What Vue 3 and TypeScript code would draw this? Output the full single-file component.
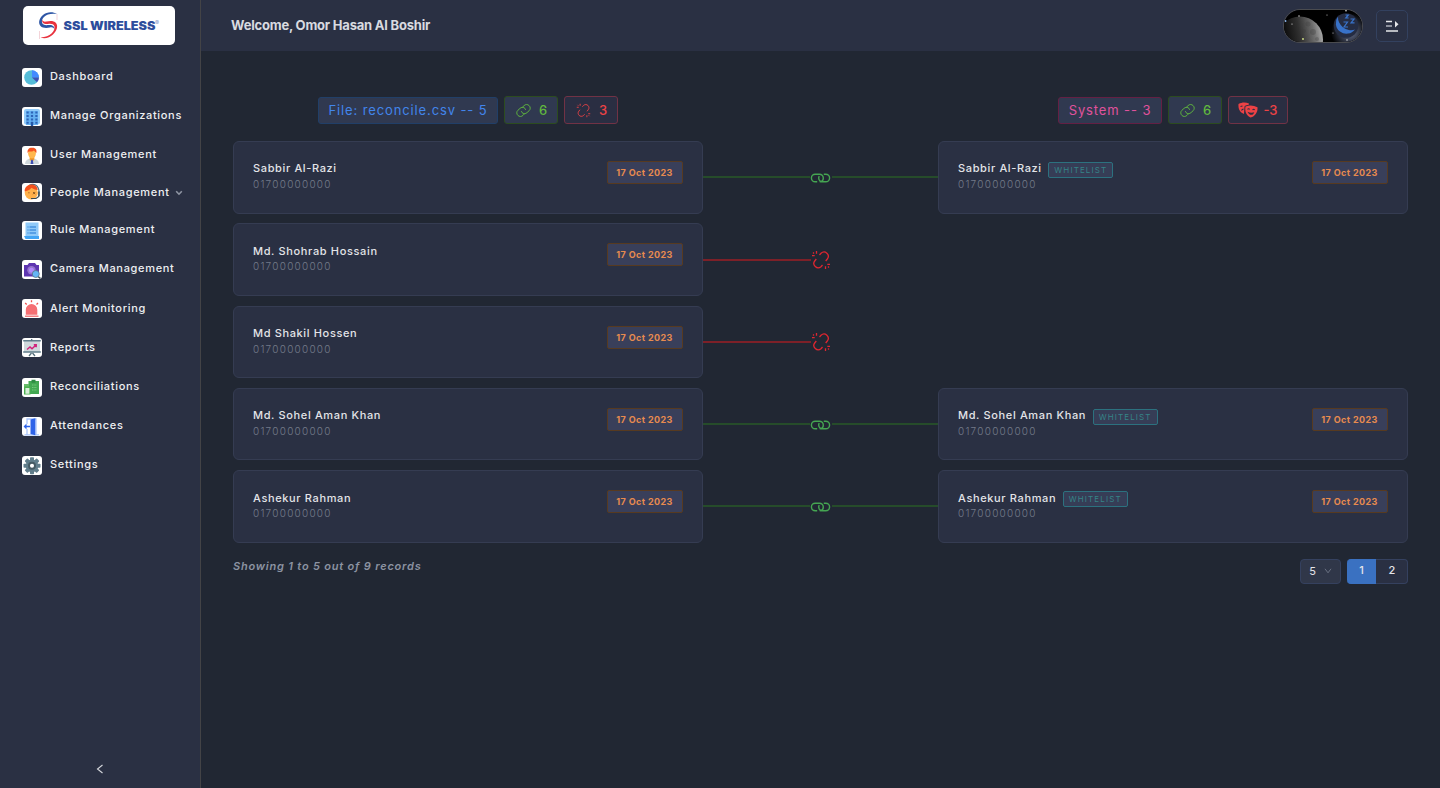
<script setup lang="ts">
interface NavItem {
  icon: string
  label: string
  expandable?: boolean
}
interface Person {
  name: string
  phone: string
  date: string
  matched: boolean
}

const nav: NavItem[] = [
  { icon: 'pie', label: 'Dashboard' },
  { icon: 'building', label: 'Manage Organizations' },
  { icon: 'user', label: 'User Management' },
  { icon: 'people', label: 'People Management', expandable: true },
  { icon: 'rule', label: 'Rule Management' },
  { icon: 'camera', label: 'Camera Management' },
  { icon: 'alert', label: 'Alert Monitoring' },
  { icon: 'report', label: 'Reports' },
  { icon: 'clipboard', label: 'Reconciliations' },
  { icon: 'door', label: 'Attendances' },
  { icon: 'gear', label: 'Settings' },
]

const phone = '01700000000'
const date = '17 Oct 2023'
const records: Person[] = [
  { name: 'Sabbir Al-Razi', phone, date, matched: true },
  { name: 'Md. Shohrab Hossain', phone, date, matched: false },
  { name: 'Md Shakil Hossen', phone, date, matched: false },
  { name: 'Md. Sohel Aman Khan', phone, date, matched: true },
  { name: 'Ashekur Rahman', phone, date, matched: true },
]

const gearTeeth = [0, 45, 90, 135, 180, 225, 270, 315]
</script>

<template>
  <div class="app">
    <aside class="sidebar">
      <div class="logo">
        <svg width="152" height="39" viewBox="0 0 152 39">
          <path d="M34 8C30 5.500 24 5.500 20 9c-4 3.500-5 8-2.500 11 2 2.200 6 2.300 9.500 1.500 2.500-.5 4 .3 4.300 2C32 20 29 18.500 25.500 19c-3 .4-6 0-6.500-2.500C18.300 12 23 6.500 34 8z" fill="#2d55a5" />
          <path d="M17.500 31.500c4 1.500 9 .5 12.500-3 4-4 5.300-8.500 3-11.500-2-2.300-6-2.300-9.500-1.500-2.500.5-4-.3-4.300-2-.7 3.500 2.300 5 5.800 4.500 3-.4 6 0 6.500 2.500.7 4.500-4 10.500-14 11z" fill="#e8323e" />
          <path d="M16.500 25v8M34 8v6" stroke="#f0c3c9" stroke-width="1" opacity=".7" />
          <text class="logo-text" x="40.500" y="24" textLength="92" lengthAdjust="spacingAndGlyphs">SSL WIRELESS</text>
          <text class="logo-mark" x="132" y="19">®</text>
        </svg>
      </div>
      <nav class="nav">
        <div v-for="item in nav" :key="item.label" class="nav-item" :class="{ compact: item.expandable }">
          <span class="nav-icon">
            <svg width="20" height="19" viewBox="0 0 20 19">
              <g v-if="item.icon === 'pie'">
                <circle cx="9.500" cy="9.500" r="7.300" fill="#55bcd8" />
                <path d="M10 9.500V2.200A7.300 7.300 0 0 1 17 9.500z" fill="#448aff" />
                <path d="M10 9.500h7a7 7 0 0 1-2 4.800z" fill="#3f51b5" />
              </g>
              <g v-else-if="item.icon === 'building'">
                <rect x="2" y="2" width="16" height="15.500" rx="2" fill="#90caf9" />
                <path d="M4 4h12v14H4z" fill="#64b0f2" />
                <path d="M4.500 5.500h11M4.500 9h11M4.500 12.500h11M4.500 15.700h11" stroke="#2d64b8" stroke-width="2" stroke-dasharray="2.200 2.200" />
                <path d="M8.800 15h2.400v4H8.800z" fill="#2457a6" />
              </g>
              <g v-else-if="item.icon === 'user'">
                <path d="M3 18c.3-4 3-5 5-5.500h4c2 .5 4.700 1.500 5 5.500z" fill="#cfd8dc" />
                <path d="M7.700 10h4.600v4L10 15.500 7.700 14z" fill="#f59b28" />
                <ellipse cx="10" cy="7.500" rx="3.900" ry="4.800" fill="#ffb74d" />
                <path d="M5.700 7C5 3.500 7 1.500 10.500 1.800c3.500 0 4.500 2.500 3.800 5.200C13 6 12.500 5 12 4.500 10 6 8 5.500 6.800 5.500z" fill="#f4511e" />
                <path d="M9.200 13.800h1.600l.6 4.200H8.600z" fill="#3f51b5" />
              </g>
              <g v-else-if="item.icon === 'people'">
                <path d="M7 2.500c5-3 10 0 10 6.500v2" fill="none" stroke="#546e7a" stroke-width="1.200" />
                <circle cx="9.300" cy="9.800" r="6.600" fill="#ffb04a" />
                <path d="M2.700 8.500C2.200 4.500 6 1.300 9.500 1.500c4 0 6.200 2.700 6.200 5.500C13 7 11 6 9.500 4.800 8 7 5 8.200 2.700 8.500z" fill="#f4511e" />
                <path d="M6.300 9.800h1.200M11 9l2.200 2.200M13.200 9 11 11.200" stroke="#784719" stroke-width=".8" />
                <path d="M16.800 11v2.500L14 15.500H9" fill="none" stroke="#37474f" stroke-width="1.200" />
                <path d="M16 8.500h1.800v4.500H16z" fill="#455a64" />
              </g>
              <g v-else-if="item.icon === 'rule'">
                <path d="M3.500 1.500h13v14h-13z" fill="#90caf9" />
                <path d="M2 15h15v3H3.500z" fill="#42a5f5" />
                <path d="M5.500 6h1M7.500 6h6.500M5.500 9h1M7.500 9h6.500M5.500 12h1M7.500 12h6.500" stroke="#4693df" stroke-width="1.300" />
              </g>
              <g v-else-if="item.icon === 'camera'">
                <path d="M2 5h3.500L7 3h6l1.500 2H17v11.500H2z" fill="#5e35b1" />
                <circle cx="9.500" cy="10.200" r="4.200" fill="#9575cd" />
                <circle cx="9.500" cy="10.200" r="2.500" fill="#b388ff" />
                <path d="m15.500 16 3 2.500" stroke="#37474f" stroke-width="1.500" />
                <circle cx="13.800" cy="14" r="3.500" fill="#64b5f6" stroke="#5b7382" stroke-width=".8" />
              </g>
              <g v-else-if="item.icon === 'alert'">
                <path d="M3.800 15.800v-5a5.700 5.700 0 0 1 11.500 0v5z" fill="#f56f73" />
                <path d="M3 17.200h13.500" stroke="#f27c80" stroke-width="1.400" />
                <path d="M9.500 1.200v2M3.200 4 4.700 5.500M16 4l-1.500 1.500" stroke="#ef5350" stroke-width="1.300" />
              </g>
              <g v-else-if="item.icon === 'report'">
                <path d="M2 3h16v11H2z" fill="#cfd8dc" />
                <path d="M1.200 2.700h17.600M1.200 14h17.600" stroke="#607d8b" stroke-width="1.500" />
                <path d="M9.700 1v1.500M9.500 15l-2.500 3M10.500 15l2.500 3" stroke="#546e7a" stroke-width="1.300" />
                <path d="m5 11.500 3-2.500 2 1.800 4-3.800M11.800 6.700H14.200v2.500" fill="none" stroke="#d0247c" stroke-width="1.500" />
              </g>
              <g v-else-if="item.icon === 'clipboard'">
                <path d="M6.500 3h10.500v13H6.500z" fill="#43a852" />
                <path d="M9.500 1.800h4v3h-4z" fill="#2e8b43" />
                <path d="M2 6h5v3H2z" fill="#66bb6a" />
                <path d="M2 8.500h6.500v8H2z" fill="#4caf50" />
                <path d="M3.400 10h4v5.700H3.400z" fill="#d7efd8" />
                <path d="M10 7h5M10 9.500h5M10 12h5" stroke="#74ca7a" stroke-width="1" stroke-dasharray="1.500 .8" />
              </g>
              <g v-else-if="item.icon === 'door'">
                <path d="M5 7V2h9v15.500M5 12v5.500M2.500 17.800h14.500" fill="none" stroke="#a8c3fa" stroke-width="1.300" />
                <path d="m8.500 2.500 4.800-1.200v17l-4.800-1.200z" fill="#2e63e8" />
                <path d="M8 9.500H2.500M4.500 7.500l-2 2 2 2" fill="none" stroke="#2e63e8" stroke-width="1.300" />
              </g>
              <g v-else>
                <rect v-for="a in gearTeeth" :key="a" x="8" y="1.200" width="4" height="5" rx=".8" fill="#607d8b" :transform="`rotate(${a} 10 9.700)`" />
                <circle cx="10" cy="9.700" r="6.300" fill="#607d8b" />
                <circle cx="10" cy="9.700" r="3" fill="#fff" stroke="#455a64" stroke-width="1.900" />
              </g>
            </svg>
          </span>
          <span class="nav-label">{{ item.label }}</span>
          <svg v-if="item.expandable" class="nav-chevron" width="8" height="6" viewBox="0 0 8 6">
            <path d="m1.200 1.200 2.800 3 2.800-3" fill="none" stroke="#8f95a3" stroke-width="1.600" />
          </svg>
        </div>
      </nav>
      <div class="collapse">
        <svg width="8" height="10" viewBox="0 0 8 10"><path d="M6.500 1 1.500 5l5 4" fill="none" stroke="#d5d7dc" stroke-width="1.100" /></svg>
      </div>
    </aside>

    <div class="page">
      <header class="topbar">
        <h1 class="welcome">Welcome, Omor Hasan Al Boshir</h1>
        <div class="theme-toggle">
          <svg width="78" height="32" viewBox="0 0 78 32">
            <defs>
              <linearGradient id="moon" x1=".1" y1=".4" x2=".95" y2=".25">
                <stop offset="0" stop-color="#050505" />
                <stop offset=".45" stop-color="#303030" />
                <stop offset=".8" stop-color="#6c6c6c" />
                <stop offset="1" stop-color="#a3a3a3" />
              </linearGradient>
              <radialGradient id="glow">
                <stop offset="0" stop-color="#67718f" />
                <stop offset="1" stop-color="#000" />
              </radialGradient>
            </defs>
            <rect width="78" height="32" fill="#000" />
            <circle cx="66" cy="22" r="19" fill="url(#glow)" />
            <circle cx="16" cy="29.500" r="23" fill="url(#moon)" />
            <g fill="#3c3c3c" opacity=".3"><circle cx="24" cy="14" r="2.500" /><circle cx="29" cy="22" r="3" /><circle cx="20" cy="21" r="2" /><circle cx="33" cy="29" r="2" /></g>
            <g fill="#eee"><circle cx="15" cy="6" r=".7" /><circle cx="8" cy="14" r=".6" /><circle cx="43" cy="5" r=".5" /><circle cx="62" cy=".8" r=".8" /><circle cx="49" cy="23" r=".5" /><circle cx="63" cy="30" r=".7" /></g>
            <circle cx="19" cy="29" r=".9" fill="#d8e98b" />
            <circle cx="1.500" cy="11" r="1" fill="#8bb7ee" />
            <circle cx="62" cy="15.500" r="12.300" fill="#252c42" />
            <path d="M54 6.500A10.500 10.500 0 1 0 71 19.500 13 13 0 0 1 54 6.500z" fill="#3872c9" />
            <path d="M59.500 12h4l-3.500 5h4M66.500 9h3.500l-3 3.800h3.500M61.500 5h2.800l-2.500 3h2.800" fill="none" stroke="#3872c9" stroke-width="1.200" />
          </svg>
        </div>
        <button class="menu-button">
          <svg width="14" height="14" viewBox="0 0 14 14">
            <path d="M1 2.500h6M1 12h12" stroke="#e6e7ea" stroke-width="1.500" />
            <path d="M1 7h6" stroke="#b0b3bc" stroke-width="1.500" />
            <path d="m10 2 3.500 3.200-3.500 3.300z" fill="#e6e7ea" />
          </svg>
        </button>
      </header>

      <main class="content">
        <div class="summary">
          <div v-for="side in 2" :key="side" class="summary-side">
            <span v-if="side === 1" class="tag source blue">File: reconcile.csv -- 5</span>
            <span v-else class="tag source pink">System -- 3</span>
            <span class="tag count green">
              <svg width="15" height="15" viewBox="0 0 16 16">
                <g fill="none" stroke="currentColor" stroke-width="1" stroke-linecap="round">
                  <path d="M6.800 4.600 8.600 2.800a3.700 3.700 0 0 1 5.400 0 3.700 3.700 0 0 1 0 5.400L11.800 10.200a3.700 3.700 0 0 1-5.400 0 2.500 2.500 0 0 1-.6-1.100" />
                  <path d="M9.200 11.400 7.400 13.200a3.700 3.700 0 0 1-5.400 0 3.700 3.700 0 0 1 0-5.400L4.200 5.800a3.700 3.700 0 0 1 5.400 0c.3.300.5.600.6 1.100" />
                </g>
              </svg>
              <b>6</b>
            </span>
            <span v-if="side === 1" class="tag count red">
              <svg width="15" height="15" viewBox="0 0 20 20">
                <g fill="none" stroke="currentColor" stroke-width="1.200">
                  <path d="m8.500 5 1.500-1.700c4-3.600 9.500 1.500 6.300 5.700L14.700 11" />
                  <path d="m11.500 15-1.500 1.700C6 20 .8 15 3.700 11L5.300 9" />
                  <path d="M5.500 1v2.700M1 5.700h2.700M14.500 16.300V19M16.300 14.300H19M2 2.500 3 3.500M18 17.500l-1-1" />
                </g>
              </svg>
              <b>3</b>
            </span>
            <span v-else class="tag count red masks">
              <svg width="20" height="16" viewBox="0 0 20 16">
                <path d="M.5 2C4 0 7.500 0 11 1.500L10.500 3C8.500 3 7 3.500 6.500 4.500L6 12C2 10.500 0 7 .5 2z" fill="currentColor" />
                <path d="M7.500 4.500c4-1.500 8-1.200 12 .7C20 10 17 14.500 12.500 15.500 8.500 13.500 6.500 9.500 7.500 4.500z" fill="currentColor" />
                <path d="M2.500 4.500 4.500 4M3.500 8.500c.5-1 1-1.300 2-1.400M9.500 7.300c.8-.8 1.600-.6 2.200 0M14.500 7.800c.8-.6 1.600-.6 2.200.2" stroke="#2a3043" fill="none" stroke-width="1.100" />
                <path d="M9.500 9.800c2 1 4.500 1.200 6.800.5-1 3.500-5.300 3.500-6.800-.5z" fill="#2a3043" />
              </svg>
              <b>-3</b>
            </span>
          </div>
        </div>

        <div class="records">
          <div v-for="person in records" :key="person.name" class="record">
            <article class="card">
              <div class="identity">
                <div class="name">{{ person.name }}</div>
                <div class="phone">{{ person.phone }}</div>
              </div>
              <span class="date">{{ person.date }}</span>
            </article>
            <div class="link" :class="person.matched ? 'matched' : 'broken'">
              <i class="wire"></i>
              <svg v-if="person.matched" class="joint" width="22" height="12" viewBox="0 0 22 12">
                <g fill="none" stroke="#45a552" stroke-width="1.400">
                  <path d="M7.200 9.800H5.200a3.800 3.800 0 0 1 0-7.600h4.300a3.800 3.800 0 0 1 3.800 3.800 3.800 3.800 0 0 1-3.600 3.800" />
                  <path d="M13.800 2.200h2a3.800 3.800 0 0 1 0 7.600h-3.300A3.800 3.800 0 0 1 8.700 6c0-.8.200-1.300.6-1.900" />
                </g>
              </svg>
              <svg v-else width="20" height="20" viewBox="0 0 20 20">
                <g fill="none" stroke="#de2630" stroke-width="1.300">
                  <path d="m8.500 5 1.500-1.700c4-3.600 9.500 1.500 6.300 5.700L14.700 11" />
                  <path d="m11.500 15-1.500 1.700C6 20 .8 15 3.700 11L5.300 9" />
                  <path d="M5.500 1v2.700M1 5.700h2.700M14.500 16.300V19M16.300 14.300H19M2 2.500 3 3.500M18 17.500l-1-1" />
                </g>
              </svg>
              <i class="wire" :class="{ hidden: !person.matched }"></i>
            </div>
            <article v-if="person.matched" class="card">
              <div class="identity">
                <div class="name">{{ person.name }}<span class="whitelist">WHITELIST</span></div>
                <div class="phone">{{ person.phone }}</div>
              </div>
              <span class="date">{{ person.date }}</span>
            </article>
          </div>
        </div>

        <footer class="footer">
          <em class="showing">Showing 1 to 5 out of 9 records</em>
          <div class="pager">
            <span class="page-size">5
              <svg width="8" height="6" viewBox="0 0 8 6"><path d="m1 .8 3 4 3-4" fill="none" stroke="#6a7182" /></svg>
            </span>
            <span class="pages"><b class="current">1</b><b>2</b></span>
          </div>
        </footer>
      </main>
    </div>
  </div>
</template>

<style>
body {
  background: #212733;
}
</style>

<style scoped>
* {
  box-sizing: border-box;
}
.app {
  display: flex;
  height: 788px;
  overflow: hidden;
  background: #212733;
  color: #e4e5e9;
  font-family: Inter, "Liberation Sans", sans-serif;
}
svg {
  display: block;
  flex: none;
}
.sidebar {
  display: flex;
  flex-direction: column;
  width: 201px;
  padding-top: 6px;
  background: #2a3043;
  border-right: 1px solid #434346;
}
.logo {
  width: 152px;
  height: 39px;
  margin-left: 23px;
  border-radius: 5px;
  background: #fff;
}
.logo-text {
  font: 900 11.500px Inter, sans-serif;
  fill: #2d4d9c;
}
.logo-mark {
  font: 6px Inter, sans-serif;
  fill: #8197c7;
}
.nav {
  margin-top: 12.500px;
  padding-left: 22px;
}
.nav-item {
  display: flex;
  align-items: center;
  height: 39.150px;
}
.nav-item.compact {
  height: 36px;
}
.nav-icon {
  width: 20px;
  height: 19px;
  border-radius: 3px;
  background: #fff;
  overflow: hidden;
}
.nav-label {
  margin: -2.300px 0 0 8px;
  font-size: 11px;
  font-weight: 500;
  letter-spacing: 0.680px;
  white-space: nowrap;
  color: #eeeff2;
}
.nav-chevron {
  margin-left: 5.500px;
}
.collapse {
  display: flex;
  justify-content: center;
  margin-top: auto;
  padding-bottom: 14px;
}
.page {
  flex: 1;
}
.topbar {
  display: flex;
  align-items: center;
  height: 51px;
  padding: 0 32px 0 30px;
  background: #2a3043;
}
.welcome {
  flex: 1;
  margin: 0;
  padding-bottom: 2px;
  font-size: 13px;
  font-weight: 700;
  letter-spacing: -0.200px;
  color: #d9dbe0;
}
.theme-toggle {
  width: 80px;
  height: 34px;
  border: 1px solid #4a4b4f;
  border-radius: 17px;
  overflow: hidden;
}
.menu-button {
  display: flex;
  align-items: center;
  justify-content: center;
  width: 32px;
  height: 32px;
  margin-left: 13px;
  padding: 0;
  border: 1px solid #33415f;
  border-radius: 5px;
  background: #2a3043;
}
.content {
  padding: 45px 32px 0;
}
.summary {
  display: flex;
  justify-content: space-between;
}
.summary-side {
  display: flex;
  align-items: flex-end;
  justify-content: center;
  gap: 6px;
  width: 470px;
}
.tag {
  display: flex;
  align-items: center;
  justify-content: center;
  border: 1px solid;
  border-radius: 3px;
  background: #303950;
}
.source {
  height: 27px;
  padding-bottom: 2px;
  font-size: 13px;
  letter-spacing: 0.880px;
  white-space: nowrap;
}
.source.blue {
  width: 180px;
  color: #4285eb;
  border-color: #213f68;
}
.source.pink {
  width: 104px;
  color: #e0529c;
  border-color: #642044;
}
.count {
  gap: 8px;
  width: 54px;
  height: 28px;
  padding-left: 1px;
  font-size: 13px;
}
.count b {
  font-weight: 500;
}
.count.green {
  color: #60b83e;
  border-color: #2c4c1f;
}
.count.red {
  color: #ed4245;
  border-color: #713245;
  background: #2a2e42;
}
.count.masks {
  width: 60px;
  gap: 5px;
  padding-left: 0;
}
.records {
  display: grid;
  gap: 9.800px;
  margin-top: 17px;
}
.record {
  display: grid;
  grid-template-columns: 470px 235px 470px;
  height: 72.500px;
}
.card {
  display: flex;
  justify-content: space-between;
  padding: 19px;
  border: 1px solid #353c52;
  border-radius: 6px;
  background: #2a3043;
}
.identity {
  margin-top: -1.100px;
}
.name {
  display: flex;
  align-items: center;
  height: 17px;
  font-size: 11px;
  font-weight: 500;
  letter-spacing: 0.640px;
  color: #e3e4e8;
}
.phone {
  margin-top: -1px;
  font-size: 10px;
  line-height: 17px;
  font-weight: 300;
  letter-spacing: 1.250px;
  color: #747b8a;
}
.whitelist {
  display: flex;
  align-items: center;
  justify-content: center;
  width: 65px;
  height: 16px;
  margin: 3px 0 0 6.500px;
  border: 1px solid #2c717f;
  border-radius: 2px;
  background: #363d56;
  color: #358487;
  font-size: 8px;
  font-weight: 400;
  letter-spacing: 1.100px;
}
.date {
  display: flex;
  align-items: center;
  justify-content: center;
  width: 76px;
  height: 23px;
  padding-right: 1px;
  border: 1px solid #573a20;
  border-radius: 2px;
  background: #393f5a;
  color: #e88b4f;
  font-size: 9px;
  font-weight: 700;
  letter-spacing: 0.400px;
}
.link {
  display: flex;
  align-items: center;
}
.joint {
  margin-top: 1px;
}
.wire {
  flex: 1;
  height: 2px;
}
.matched .wire {
  margin-bottom: 1px;
  background: #264c2a;
}
.broken .wire {
  background: #7d2028;
}
.wire.hidden {
  visibility: hidden;
}
.footer {
  display: flex;
  justify-content: space-between;
  margin-top: 16px;
}
.showing {
  font-size: 11px;
  font-weight: 600;
  letter-spacing: 0.800px;
  color: #8c93a2;
}
.pager {
  display: flex;
  gap: 6px;
  font-size: 11px;
}
.page-size {
  display: flex;
  align-items: center;
  justify-content: center;
  gap: 8px;
  width: 41px;
  height: 25px;
  border: 1px solid #35415f;
  border-radius: 4px;
  background: #303749;
}
.pages {
  display: flex;
  width: 61px;
  height: 25px;
}
.pages b {
  flex: 1;
  padding-left: 1px;
  border: 1px solid #35415f;
  border-left: 0;
  border-radius: 0 4px 4px 0;
  background: #2a3043;
  text-align: center;
  line-height: 21px;
  font-weight: 500;
}
.pages .current {
  flex: 0 0 29px;
  border-color: #3a71c1;
  border-radius: 4px 0 0 4px;
  background: #3a71c1;
}
</style>
